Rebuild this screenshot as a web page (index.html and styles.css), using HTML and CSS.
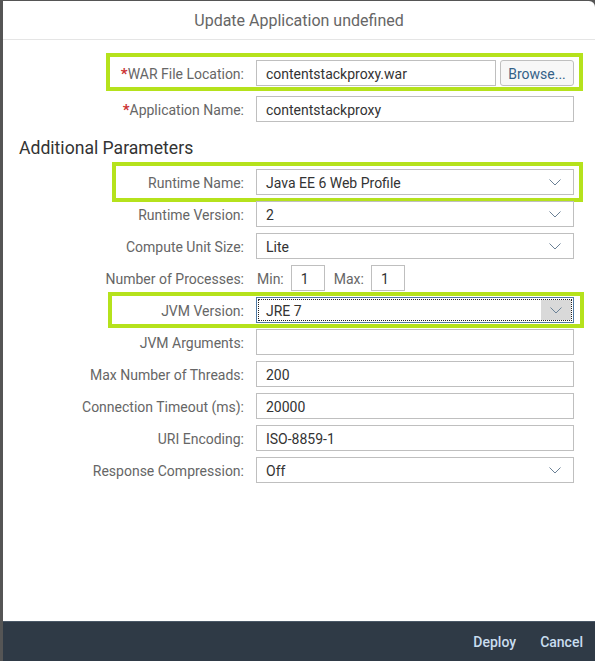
FILE: index.html
```html
<!DOCTYPE html>
<html>
<head>
<meta charset="utf-8">
<link rel="stylesheet" href="styles.css">
</head>
<body>
<div class="dialog">
  <header class="dlg-header"><h1 class="dlg-title">Update Application undefined</h1></header>
  <main class="dlg-body">
    <div class="row hl hl-war">
      <label class="lbl"><span class="req">*</span>WAR File Location:</label>
      <div class="ctl ctl-file"><div class="field field-grow">contentstackproxy.war</div><button class="btn">Browse...</button></div>
    </div>
    <div class="row row-app">
      <label class="lbl"><span class="req">*</span>Application Name:</label>
      <div class="ctl"><div class="field">contentstackproxy</div></div>
    </div>

    <h2 class="section">Additional Parameters</h2>

    <div class="rows">
      <div class="row hl hl-runtime">
        <label class="lbl">Runtime Name:</label>
        <div class="ctl"><div class="field select">Java EE 6 Web Profile<span class="arrow"><svg width="12" height="7" viewBox="0 0 12 7"><polyline points="0.5,0.5 6,6 11.5,0.5" fill="none" stroke="#6b8196" stroke-width="1"/></svg></span></div></div>
      </div>
      <div class="row">
        <label class="lbl">Runtime Version:</label>
        <div class="ctl"><div class="field select">2<span class="arrow"><svg width="12" height="7" viewBox="0 0 12 7"><polyline points="0.5,0.5 6,6 11.5,0.5" fill="none" stroke="#6b8196" stroke-width="1"/></svg></span></div></div>
      </div>
      <div class="row">
        <label class="lbl">Compute Unit Size:</label>
        <div class="ctl"><div class="field select">Lite<span class="arrow"><svg width="12" height="7" viewBox="0 0 12 7"><polyline points="0.5,0.5 6,6 11.5,0.5" fill="none" stroke="#6b8196" stroke-width="1"/></svg></span></div></div>
      </div>
      <div class="row">
        <label class="lbl">Number of Processes:</label>
        <div class="ctl ctl-proc">
          <span class="sub">Min:</span><div class="field small">1</div>
          <span class="sub sub-max">Max:</span><div class="field small">1</div>
        </div>
      </div>
      <div class="row hl hl-jvm">
        <label class="lbl">JVM Version:</label>
        <div class="ctl"><div class="field select focused">JRE 7<span class="arrow arrow-focus"><svg width="12" height="7" viewBox="0 0 12 7"><polyline points="0.5,0.5 6,6 11.5,0.5" fill="none" stroke="#6b8196" stroke-width="1"/></svg></span></div></div>
      </div>
      <div class="row">
        <label class="lbl">JVM Arguments:</label>
        <div class="ctl"><div class="field"></div></div>
      </div>
      <div class="row">
        <label class="lbl">Max Number of Threads:</label>
        <div class="ctl"><div class="field">200</div></div>
      </div>
      <div class="row">
        <label class="lbl">Connection Timeout (ms):</label>
        <div class="ctl"><div class="field">20000</div></div>
      </div>
      <div class="row">
        <label class="lbl">URI Encoding:</label>
        <div class="ctl"><div class="field">ISO-8859-1</div></div>
      </div>
      <div class="row">
        <label class="lbl">Response Compression:</label>
        <div class="ctl"><div class="field select">Off<span class="arrow"><svg width="12" height="7" viewBox="0 0 12 7"><polyline points="0.5,0.5 6,6 11.5,0.5" fill="none" stroke="#6b8196" stroke-width="1"/></svg></span></div></div>
      </div>
    </div>
  </main>
  <footer class="dlg-footer">
    <button class="fbtn">Deploy</button>
    <button class="fbtn">Cancel</button>
  </footer>
</div>
</body>
</html>
```

FILE: styles.css
```css
html, body {
  margin: 0;
  padding: 0;
}
body {
  background: #555555;
  width: 595px;
  height: 661px;
  overflow: hidden;
  font-family: Roboto, "Liberation Sans", sans-serif;
  font-size: 14px;
}
.dialog {
  margin: 1px 0 0 3px;
  width: 592px;
  height: 660px;
  background: #ffffff;
  border-top-right-radius: 6px;
  display: flex;
  flex-direction: column;
  overflow: hidden;
}
.dlg-header {
  height: 38px;
  border-bottom: 1px solid #e5e5e5;
  display: flex;
  align-items: center;
  justify-content: center;
}
.dlg-title {
  margin: 0;
  font-size: 16px;
  font-weight: normal;
  color: #666666;
}
.dlg-body {
  padding-top: 20px;
  flex: 1;
}
.row {
  position: relative;
  display: flex;
  align-items: center;
  height: 26px;
}
.row-app {
  margin-top: 10px;
}
.rows {
  display: flex;
  flex-direction: column;
  gap: 6px;
}
.lbl {
  width: 241px;
  margin-right: 12px;
  padding-top: 1px;
  text-align: right;
  color: #666666;
  white-space: nowrap;
}
.req {
  color: #cc3333;
  font-weight: bold;
  font-size: 15px;
}
.ctl {
  width: 318px;
  display: flex;
  align-items: center;
}
.field {
  position: relative;
  box-sizing: border-box;
  width: 100%;
  height: 26px;
  border: 1px solid #bfbfbf;
  background: #ffffff;
  padding: 1px 9px 0;
  line-height: 24px;
  color: #333333;
  white-space: nowrap;
}
.ctl-file {
  gap: 4px;
}
.field-grow {
  flex: 1;
}
.btn {
  box-sizing: border-box;
  width: 74px;
  height: 26px;
  border: 1px solid #bfbfbf;
  border-radius: 3px;
  background: #f7f7f7;
  color: #346187;
  font-family: inherit;
  font-size: 14px;
  padding: 1px 0 0;
}
.section {
  margin: 14px 0 9px 16px;
  font-size: 17.6px;
  line-height: 24px;
  font-weight: normal;
  color: #333333;
}
.arrow {
  position: absolute;
  right: 0;
  top: 0;
  bottom: 0;
  width: 36px;
  display: flex;
  align-items: center;
  justify-content: center;
}
.focused {
  border-color: #4f79a3;
}
.focused::before {
  content: "";
  position: absolute;
  inset: 1px;
  border: 1px dotted #222222;
  pointer-events: none;
}
.arrow-focus {
  top: 2px;
  bottom: 2px;
  right: 2px;
  width: 30px;
  background: #d9d9d9;
}
.ctl-proc .sub {
  color: #666666;
  margin: 0 7px 0 1px;
  padding-top: 1px;
}
.ctl-proc .sub-max {
  margin-left: 9px;
}
.field.small {
  width: 34px;
}
.hl::after {
  content: "";
  position: absolute;
  box-sizing: border-box;
  border: 4px solid #b5e21c;
  pointer-events: none;
}
.hl-war::after {
  top: -7px;
  left: 103px;
  width: 477px;
  height: 38px;
}
.hl-runtime::after {
  top: -7px;
  left: 109px;
  width: 471px;
  height: 40px;
}
.hl-jvm::after {
  top: -5px;
  left: 105px;
  width: 476px;
  height: 36px;
}
.dlg-footer {
  height: 39px;
  border-top: 1px solid #4a5867;
  background: #2f3a46;
  display: flex;
  align-items: center;
  justify-content: flex-end;
  gap: 24px;
  padding-right: 12px;
}
.fbtn {
  background: transparent;
  border: 0;
  padding: 0;
  color: #c9ddef;
  font-family: inherit;
  font-size: 14px;
  font-weight: 500;
}
```
